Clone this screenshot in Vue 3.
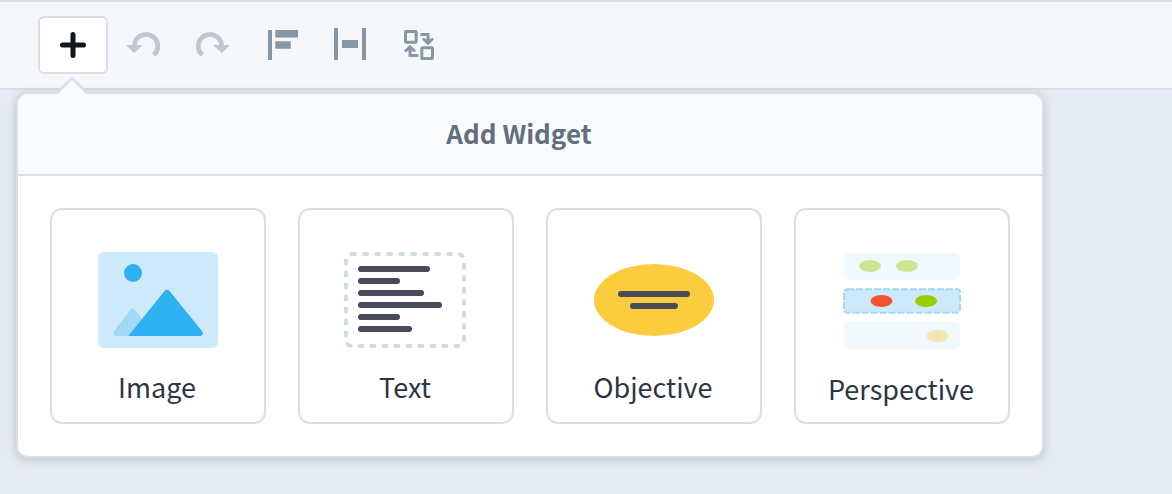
<script setup>
const widgets = [
  { id: 'image', label: 'Image' },
  { id: 'text', label: 'Text' },
  { id: 'objective', label: 'Objective' },
  { id: 'perspective', label: 'Perspective' },
]
</script>

<template>
  <div class="editor">
    <header class="toolbar">
      <button class="tool tool-add" type="button" aria-label="Add widget" aria-expanded="true">
        <svg class="tool-icon" viewBox="0 0 36 36" aria-hidden="true">
          <path d="M18 7.500V28.500M7.500 18H28.500" fill="none" stroke="#10181d" stroke-width="5" stroke-linecap="round" />
        </svg>
      </button>
      <button class="tool" type="button" aria-label="Undo">
        <svg class="tool-icon faded" viewBox="0 0 36 36" aria-hidden="true">
          <path d="M9.300 19A11.700 11.700 0 1 1 28.600 28" fill="none" stroke="currentColor" stroke-width="4.800" />
          <path d="M1 18H18L9.200 26.300Z" fill="currentColor" />
        </svg>
      </button>
      <button class="tool" type="button" aria-label="Redo">
        <svg class="tool-icon faded" viewBox="0 0 36 36" aria-hidden="true">
          <path d="M27.700 19A11.700 11.700 0 1 0 8.400 28" fill="none" stroke="currentColor" stroke-width="4.800" />
          <path d="M36 18H19L27.800 26.300Z" fill="currentColor" />
        </svg>
      </button>
      <button class="tool" type="button" aria-label="Align left">
        <svg class="tool-icon" viewBox="0 0 36 36" fill="currentColor" aria-hidden="true">
          <path d="M5 3h4v30H5zM12.300 3H35v7.600H12.300zM12.300 14.200H27.800v7.600H12.300z" />
        </svg>
      </button>
      <button class="tool" type="button" aria-label="Distribute horizontally">
        <svg class="tool-icon" viewBox="0 0 36 36" fill="currentColor" aria-hidden="true">
          <path d="M2 1h4v32H2zM30 1h4v32h-4zM10 13h16v8H10z" />
        </svg>
      </button>
      <button class="tool" type="button" aria-label="Swap widgets">
        <svg class="tool-icon" viewBox="0 0 36 36" fill="none" stroke="currentColor" stroke-width="3" aria-hidden="true">
          <rect x="4.500" y="4.500" width="10.700" height="10.700" rx="0.500" />
          <rect x="20.800" y="20.800" width="10.700" height="10.700" rx="0.500" />
          <path d="M19.500 7.500H27V14M17.500 28.500H9V22" />
          <path d="M22.500 10.800L27 13L31.500 10.800L33 12.500L27 18.300L21 12.500ZM13.500 25.200L9 23L4.500 25.200L3 23.500L9 17.700L15 23.500Z" fill="currentColor" stroke="none" />
        </svg>
      </button>
    </header>

    <main class="canvas">
      <section class="popover" aria-labelledby="popover-title">
        <svg class="pointer" viewBox="0 0 32 18" aria-hidden="true">
          <path d="M1 18L16 2.500L31 18Z" fill="#fafbfd" />
          <path d="M1 17L16 2L31 17" fill="none" stroke="#d8dfe7" stroke-width="2.500" />
        </svg>
        <h2 id="popover-title" class="title">Add Widget</h2>
        <div class="widgets">
          <button v-for="w in widgets" :key="w.id" class="card" type="button">
            <svg v-if="w.id === 'image'" width="120" height="96" viewBox="0 0 120 96" aria-hidden="true">
              <rect width="120" height="96" rx="6" fill="#cee9fa" />
              <circle cx="35" cy="21" r="9" fill="#2eb1f0" />
              <path d="M15.700 79.500L32 58.500Q34.500 54 37.500 58.500L44 67L31 84H18Q14 83 15.700 79.500Z" fill="#9fd9f6" />
              <path d="M30.300 84L66.500 39Q69 36.500 71.500 39L104.300 79.500Q106 83 102.500 84Z" fill="#2eb1f0" />
            </svg>
            <svg v-else-if="w.id === 'text'" width="124" height="96" viewBox="0 0 124 96" fill="none" stroke-linecap="round" aria-hidden="true">
              <rect x="2" y="2" width="118" height="92" rx="6" stroke="#cedae4" stroke-width="4" stroke-dasharray="3 9" />
              <path d="M17 17H83M17 29H53M17 41H77M17 53H95M17 65H53M17 77H65" stroke="#474a57" stroke-width="6" />
            </svg>
            <svg v-else-if="w.id === 'objective'" width="120" height="96" viewBox="0 0 120 96" aria-hidden="true">
              <ellipse cx="60" cy="48" rx="60" ry="36" fill="#fbcc3d" />
              <path d="M27 42H93M39 54H81" stroke="#474a57" stroke-width="6" stroke-linecap="round" />
            </svg>
            <svg v-else width="120" height="98" viewBox="0 0 120 98" aria-hidden="true">
              <rect x="2" y="1" width="116" height="27" rx="5" fill="#f1f8fe" />
              <rect x="2" y="70" width="116" height="27" rx="5" fill="#f1f8fe" />
              <rect x="2" y="37.300" width="116" height="23.400" rx="3" fill="#cee9fa" stroke="#9fd9f6" stroke-width="2" stroke-dasharray="7 2" />
              <ellipse cx="28" cy="14" rx="11" ry="6" fill="#cbe592" />
              <ellipse cx="65" cy="14" rx="11" ry="6" fill="#cbe592" />
              <ellipse cx="39.500" cy="49" rx="11" ry="6" fill="#f55230" />
              <ellipse cx="84" cy="49" rx="11" ry="6" fill="#96ce00" />
              <ellipse cx="95.700" cy="84" rx="11" ry="6" fill="#f3e6b6" />
            </svg>
            <span class="label">{{ w.label }}</span>
          </button>
        </div>
      </section>
    </main>
  </div>
</template>

<style>
body {
  margin: 0;
  background: #e6eaf2;
}
</style>

<style scoped>
.editor {
  min-height: 100vh;
  display: flex;
  flex-direction: column;
  background: #e6eaf2;
  font-family: "Noto Sans CJK SC", "Noto Sans", sans-serif;
}

.toolbar {
  display: flex;
  gap: 1px;
  padding: 14px 38px;
  border-top: 2px solid #d8dfe7;
  border-bottom: 2px solid #d8dfe7;
  background: #f5f7fb;
}

.tool {
  box-sizing: border-box;
  display: flex;
  align-items: center;
  justify-content: center;
  width: 68px;
  height: 58px;
  padding: 0;
  border: 0;
  background: none;
  color: #8997a5;
}

.tool-add {
  width: 70px;
  border: 2px solid #d8dfe7;
  border-radius: 6px;
  background: #fff;
}

.tool-icon {
  width: 36px;
  height: 36px;
}

.faded {
  color: #bfc8d1;
}

.canvas {
  flex: 1;
  padding: 2px 16px 32px;
}

.popover {
  position: relative;
  width: fit-content;
  border: 2px solid #d8dfe7;
  border-radius: 12px;
  background: #fff;
  box-shadow: 0 2px 10px rgba(60, 75, 70, 0.24);
}

.pointer {
  position: absolute;
  top: -18px;
  left: 38px;
  width: 32px;
  height: 18px;
}

.title {
  margin: 0;
  padding: 0 22px 2px 0;
  border-bottom: 2px solid #d8dfe7;
  border-radius: 10px 10px 0 0;
  background: #fafbfd;
  color: #636f7e;
  font-size: 26px;
  font-weight: 700;
  line-height: 78px;
  text-align: center;
}

.widgets {
  display: flex;
  gap: 32px;
  padding: 32px;
}

.card {
  box-sizing: border-box;
  display: flex;
  flex-direction: column;
  align-items: center;
  width: 216px;
  height: 216px;
  padding: 42px 0 0;
  border: 2px solid #d8dfe9;
  border-radius: 12px;
  background: #fff;
  color: #2d3640;
  font-family: inherit;
}

.label {
  margin-top: 19px;
  padding-right: 2px;
  font-size: 27px;
  line-height: 40px;
}
</style>
